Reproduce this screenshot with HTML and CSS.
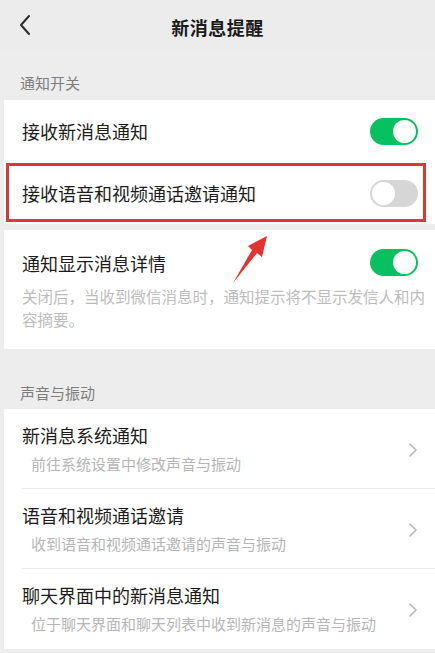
FILE: index.html
```html
<!DOCTYPE html>
<html lang="zh-CN">
<head>
  <meta charset="UTF-8">
  <title>新消息提醒</title>
  <link rel="stylesheet" href="styles.css">
</head>
<body>
  <div class="page">

    <div class="header">
      <svg class="back" width="14" height="22" viewBox="0 0 14 22">
        <path d="M11 2 L3 11 L11 20" fill="none" stroke="#2b2b2b" stroke-width="2" stroke-linecap="round" stroke-linejoin="round"/>
      </svg>
      <div class="title">新消息提醒</div>
    </div>

    <div class="section-label">通知开关</div>

    <div class="card">
      <div class="row">
        <span class="row-text">接收新消息通知</span>
        <span class="switch on"></span>
      </div>
      <div class="row marked">
        <span class="row-text">接收语音和视频通话邀请通知</span>
        <span class="switch"></span>
      </div>
    </div>

    <div class="card detail">
      <div class="detail-head">
        <span class="row-text">通知显示消息详情</span>
        <span class="switch on"></span>
      </div>
      <div class="detail-desc">关闭后，当收到微信消息时，通知提示将不显示发信人和内容摘要。</div>
    </div>

    <div class="section-label second">声音与振动</div>

    <div class="card">
      <div class="link-row">
        <div class="link-body">
          <div class="link-text">
            <div class="row-text">新消息系统通知</div>
            <div class="link-sub">前往系统设置中修改声音与振动</div>
          </div>
          <svg class="chev" width="10" height="16" viewBox="0 0 10 16"><path d="M2 2 L8 8 L2 14" fill="none" stroke="#b8b8b8" stroke-width="1.6" stroke-linecap="round" stroke-linejoin="round"/></svg>
        </div>
      </div>
      <div class="link-row">
        <div class="link-body">
          <div class="link-text">
            <div class="row-text">语音和视频通话邀请</div>
            <div class="link-sub">收到语音和视频通话邀请的声音与振动</div>
          </div>
          <svg class="chev" width="10" height="16" viewBox="0 0 10 16"><path d="M2 2 L8 8 L2 14" fill="none" stroke="#b8b8b8" stroke-width="1.6" stroke-linecap="round" stroke-linejoin="round"/></svg>
        </div>
      </div>
      <div class="link-row">
        <div class="link-body">
          <div class="link-text">
            <div class="row-text">聊天界面中的新消息通知</div>
            <div class="link-sub">位于聊天界面和聊天列表中收到新消息的声音与振动</div>
          </div>
          <svg class="chev" width="10" height="16" viewBox="0 0 10 16"><path d="M2 2 L8 8 L2 14" fill="none" stroke="#b8b8b8" stroke-width="1.6" stroke-linecap="round" stroke-linejoin="round"/></svg>
        </div>
      </div>
    </div>

    <!-- annotation arrow drawn over the screenshot -->
    <svg class="arrow" width="435" height="653" viewBox="0 0 435 653">
      <polygon points="233,283 252,250 248,246 267,236 262,257 257,253" fill="#e5312f"/>
    </svg>
  </div>
</body>
</html>
```

FILE: styles.css
```css
body {
  margin: 0;
  background: #ededed;
  font-family: "Noto Sans CJK SC", "Noto Sans", sans-serif;
  color: #1c1c1c;
}

.page {
  position: relative;
  width: 435px;
  height: 653px;
  overflow: hidden;
}

.header {
  position: relative;
  height: 54px;
  display: flex;
  align-items: center;
  justify-content: center;
  background: #ececec;
}

.back {
  position: absolute;
  left: 18px;
  top: 14px;
}

.title {
  font-size: 18px;
  font-weight: 700;
  color: #1a1a1a;
  letter-spacing: 0.5px;
}

.section-label {
  height: 28px;
  padding: 18px 0 0 20px;
  font-size: 15px;
  line-height: 22px;
  color: #7d7d7d;
}

.section-label.second {
  height: 27px;
  padding-top: 33px;
}

.card {
  margin-left: 4px;
  background: #fff;
}

.row {
  position: relative;
  height: 62px;
  padding: 0 17px 0 18px;
  display: flex;
  align-items: center;
  justify-content: space-between;
}

.row.marked::after {
  content: "";
  position: absolute;
  left: 2px;
  right: 9px;
  top: 1px;
  bottom: 2px;
  border: 3px solid #d8393b;
}

.row-text {
  font-size: 18px;
  line-height: 24px;
}

.switch {
  position: relative;
  width: 48px;
  height: 27px;
  border-radius: 14px;
  background: #d6d6d6;
  box-sizing: border-box;
}

.switch::after {
  content: "";
  position: absolute;
  left: 2px;
  top: 2px;
  width: 23px;
  height: 23px;
  border-radius: 50%;
  background: #fff;
}

.switch.on {
  background: #07c160;
}

.switch.on::after {
  left: auto;
  right: 2px;
}

.card.detail {
  margin-top: 6px;
  padding: 19px 17px 18px 18px;
}

.detail-head {
  display: flex;
  align-items: center;
  justify-content: space-between;
}

.detail-desc {
  margin-top: 9px;
  margin-right: -14px;
  font-size: 15.5px;
  line-height: 23px;
  color: #bcbcbc;
}

.link-row {
  padding-left: 18px;
}

.link-body {
  display: flex;
  align-items: center;
  justify-content: space-between;
  padding: 14px 17px 13px 0;
  border-bottom: 1px solid #ececec;
}

.link-row:last-child .link-body {
  border-bottom: none;
  padding-bottom: 14px;
}

.link-sub {
  margin-top: 6px;
  padding-left: 9px;
  font-size: 15px;
  line-height: 22px;
  color: #b5b5b5;
}

.chev {
  margin-top: 2px;
}

.arrow {
  position: absolute;
  left: 0;
  top: 0;
  pointer-events: none;
}
```
